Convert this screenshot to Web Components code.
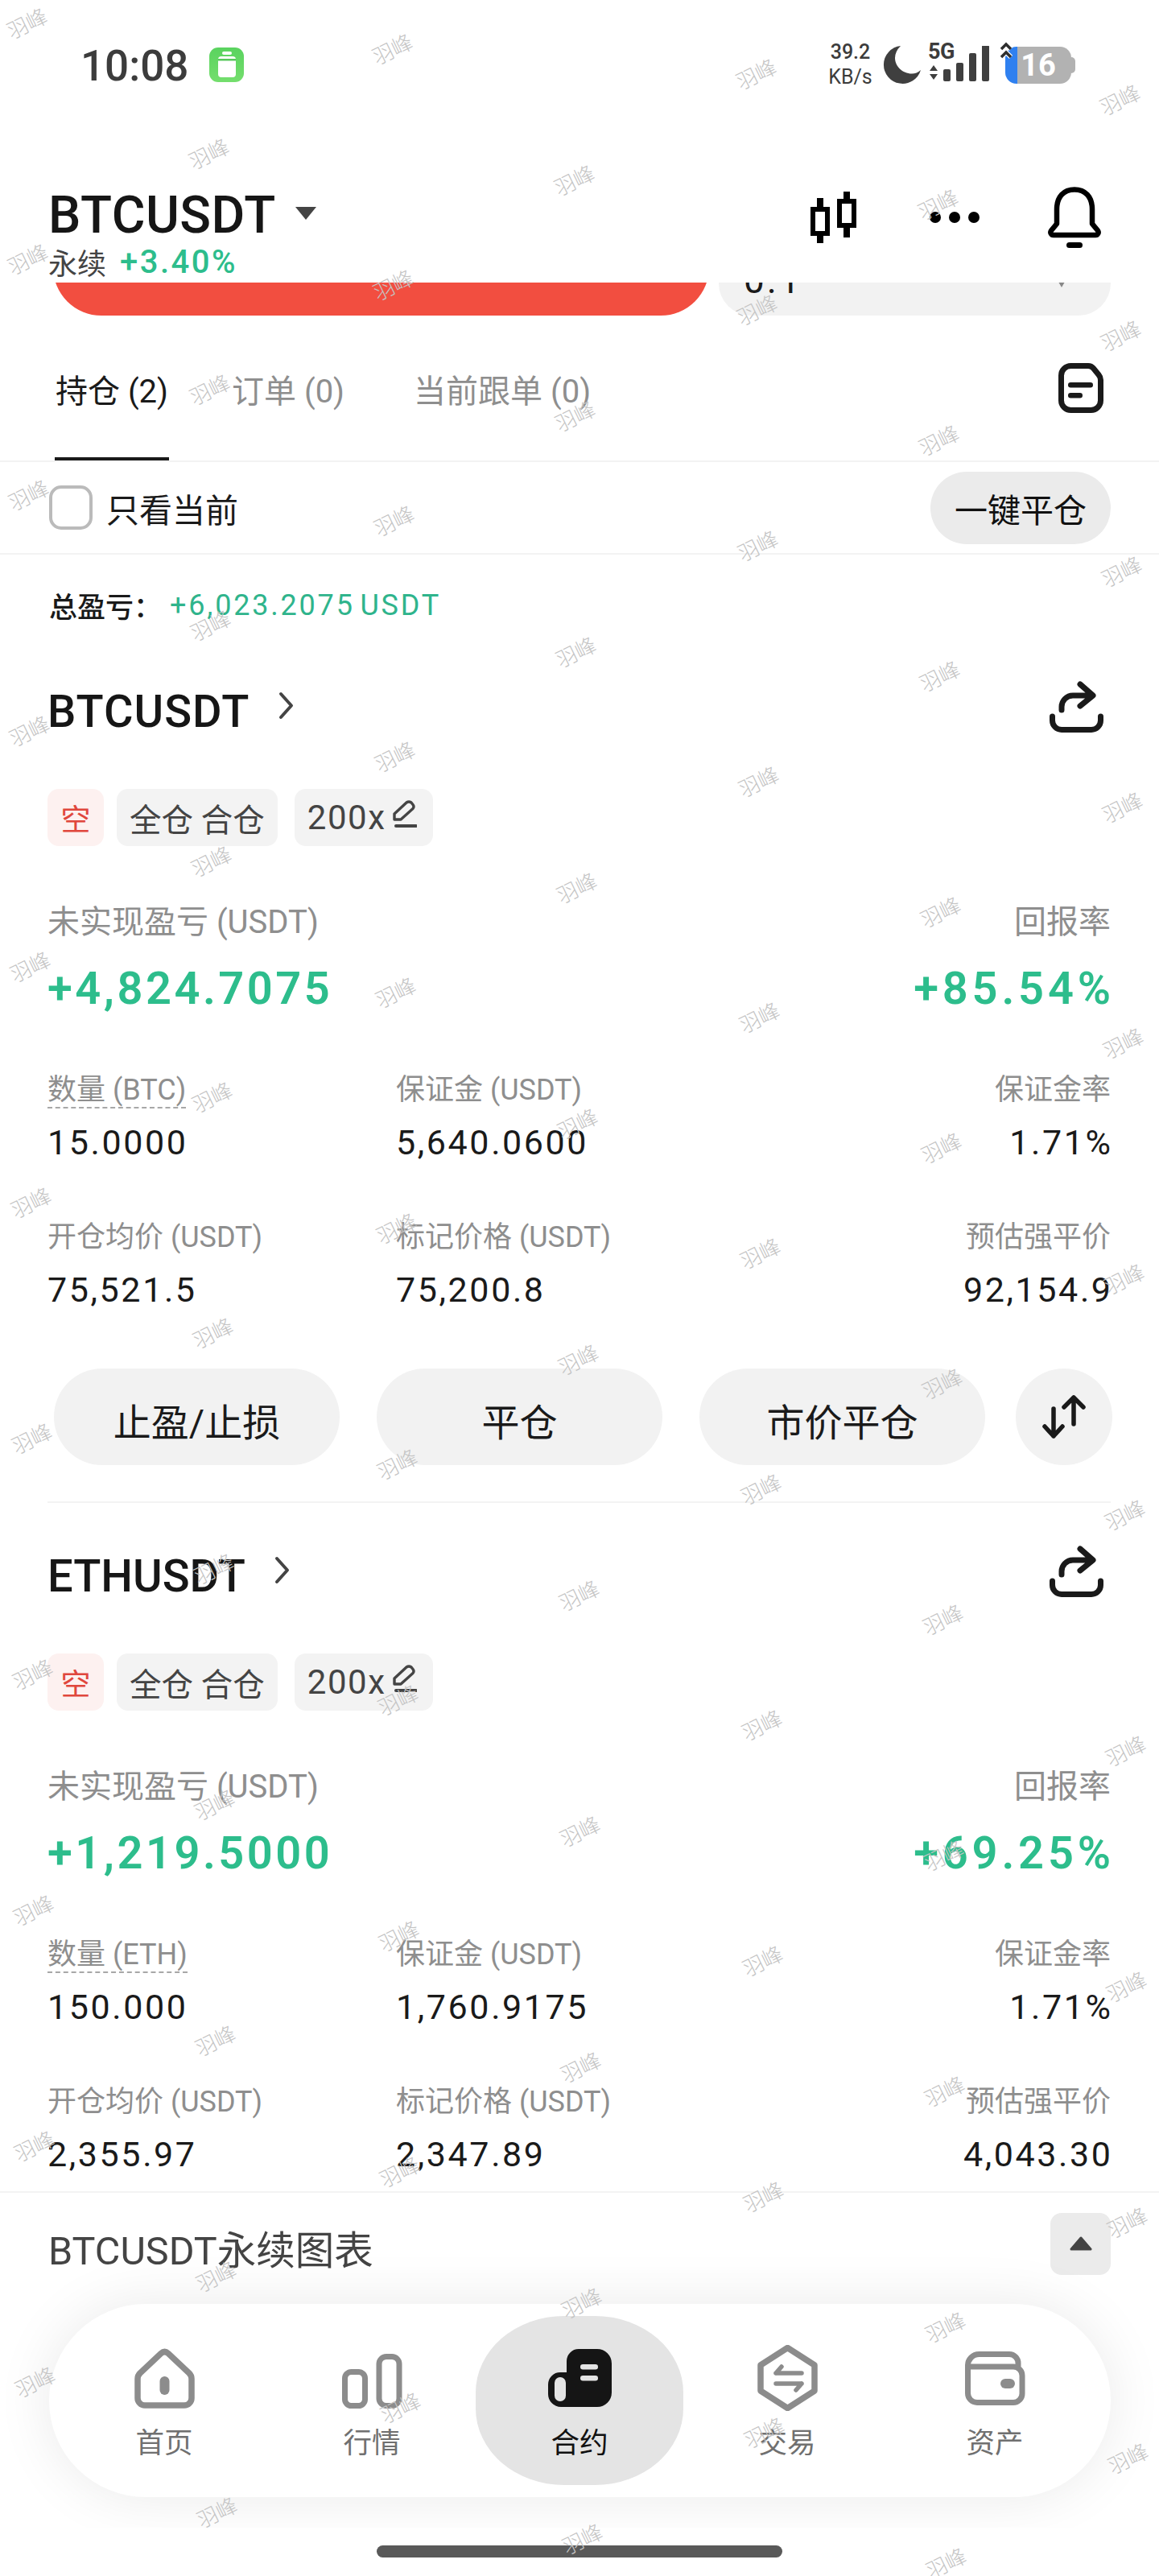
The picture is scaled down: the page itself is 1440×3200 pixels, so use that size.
<!DOCTYPE html>
<html lang="zh-CN">
<head>
<meta charset="utf-8">
<title>BTCUSDT</title>
<style>
html,body{margin:0;padding:0;background:#fff}
body{font-family:Roboto,"Noto Sans CJK SC",sans-serif;color:#1a1a1a}
</style>
</head>
<body>
<x-app>
  <x-status-bar></x-status-bar>
  <x-trade-header></x-trade-header>
  <x-order-strip></x-order-strip>
  <x-tabs>
    <x-tab active>持仓 (2)</x-tab>
    <x-tab style="margin-left:77px">订单 (0)</x-tab>
    <x-tab style="margin-left:84px">当前跟单 (0)</x-tab>
  </x-tabs>
  <x-filter-row></x-filter-row>
  <x-total-row></x-total-row>

  <x-position-card>
    <span slot="symbol" style="letter-spacing:1px">BTCUSDT</span>
    <x-tag slot="tags" kind="short">空</x-tag>
    <x-tag slot="tags">全仓 合仓</x-tag>
    <x-tag slot="tags" edit style="margin-left:5px">200x</x-tag>
    <x-pnl slot="pnl"><span slot="label">未实现盈亏 (USDT)</span>+4,824.7075</x-pnl>
    <x-pnl slot="pnl" end><span slot="label">回报率</span>+85.54%</x-pnl>
    <x-metric slot="metrics" dashed><span slot="label">数量 (BTC)</span>15.0000</x-metric>
    <x-metric slot="metrics"><span slot="label">保证金 (USDT)</span>5,640.0600</x-metric>
    <x-metric slot="metrics" end><span slot="label">保证金率</span>1.71%</x-metric>
    <x-metric slot="metrics"><span slot="label">开仓均价 (USDT)</span>75,521.5</x-metric>
    <x-metric slot="metrics"><span slot="label">标记价格 (USDT)</span>75,200.8</x-metric>
    <x-metric slot="metrics" end><span slot="label">预估强平价</span>92,154.9</x-metric>
    <x-action-row slot="actions">
      <x-action>止盈/止损</x-action>
      <x-action>平仓</x-action>
      <x-action>市价平仓</x-action>
      <x-swap-action></x-swap-action>
    </x-action-row>
  </x-position-card>

  <x-position-card>
    <span slot="symbol">ETHUSDT</span>
    <x-tag slot="tags" kind="short">空</x-tag>
    <x-tag slot="tags">全仓 合仓</x-tag>
    <x-tag slot="tags" edit style="margin-left:5px">200x</x-tag>
    <x-pnl slot="pnl"><span slot="label">未实现盈亏 (USDT)</span>+1,219.5000</x-pnl>
    <x-pnl slot="pnl" end><span slot="label">回报率</span>+69.25%</x-pnl>
    <x-metric slot="metrics" dashed><span slot="label">数量 (ETH)</span>150.000</x-metric>
    <x-metric slot="metrics"><span slot="label">保证金 (USDT)</span>1,760.9175</x-metric>
    <x-metric slot="metrics" end><span slot="label">保证金率</span>1.71%</x-metric>
    <x-metric slot="metrics"><span slot="label">开仓均价 (USDT)</span>2,355.97</x-metric>
    <x-metric slot="metrics"><span slot="label">标记价格 (USDT)</span>2,347.89</x-metric>
    <x-metric slot="metrics" end><span slot="label">预估强平价</span>4,043.30</x-metric>
  </x-position-card>

  <x-chart-row></x-chart-row>

  <x-dock>
    <x-dock-item>
      <svg slot="icon" width="75" height="75" viewBox="0 0 75 75"><path d="M33 6.5Q37.500 2.500 42 6.500L68 31Q71 34 71 38V62A9 9 0 0 1 62 71H13A9 9 0 0 1 4 62V38Q4 34 7 31Z" fill="none" stroke="#8c8c8c" stroke-width="7.500" stroke-linejoin="round"/><rect x="31.500" y="35" width="12" height="23" rx="6" fill="#8c8c8c"/></svg>
      首页
    </x-dock-item>
    <x-dock-item>
      <svg slot="icon" width="75" height="68" viewBox="0 0 75 68" style="margin-top:7px"><rect x="3.500" y="22.500" width="25" height="42" rx="8" fill="none" stroke="#8c8c8c" stroke-width="7"/><rect x="46" y="3.500" width="25" height="61" rx="9" fill="none" stroke="#8c8c8c" stroke-width="7"/></svg>
      行情
    </x-dock-item>
    <x-dock-item active>
      <svg slot="icon" width="79" height="72" viewBox="0 0 79 72"><path d="M38 0H61A18 18 0 0 1 79 18V54A18 18 0 0 1 61 72H16A16 16 0 0 1 0 56V44A15 15 0 0 1 15 29H23V15A15 15 0 0 1 38 0Z" fill="#151515"/><rect x="8" y="35" width="14" height="30" rx="7" fill="#e4e4e4"/><rect x="40" y="19" width="22" height="6.500" rx="3.200" fill="#e4e4e4"/><rect x="40" y="33" width="22" height="6.500" rx="3.200" fill="#e4e4e4"/></svg>
      合约
    </x-dock-item>
    <x-dock-item>
      <svg slot="icon" width="75" height="82" viewBox="0 0 75 82"><path d="M37.500 3.500L71 25V57L37.500 78.500L4 57V25Z" fill="none" stroke="#8c8c8c" stroke-width="7.500" stroke-linejoin="round"/><path d="M23 35H55M23 35L30 27M55 48H23M55 48L48 56" fill="none" stroke="#8c8c8c" stroke-width="5.500" stroke-linecap="round" stroke-linejoin="round"/></svg>
      交易
    </x-dock-item>
    <x-dock-item>
      <svg slot="icon" width="75" height="67" viewBox="0 0 75 67"><path d="M3.500 18A14 14 0 0 1 17.500 3.500H55A11 11 0 0 1 66 14.500V20M3.500 18V52A11.500 11.500 0 0 0 15 63.500H60A11 11 0 0 0 71 52.500V30A11 11 0 0 0 60 19H3.500" fill="none" stroke="#8c8c8c" stroke-width="7"/><rect x="44" y="34" width="18" height="12" rx="6" fill="#8c8c8c"/></svg>
      资产
    </x-dock-item>
  </x-dock>

  <x-watermarks></x-watermarks>
</x-app>

<script>
const def=(name,css,html)=>customElements.define(name,class extends HTMLElement{
  constructor(){super();this.attachShadow({mode:'open'}).innerHTML=`<style>${css}</style>${html}`;}
});

def('x-app',`:host{display:block;position:relative;width:1440px;height:3200px;overflow:hidden;background:#fff;font-family:Roboto,"Noto Sans CJK SC",sans-serif;color:#1a1a1a}`,`<slot></slot>`);

def('x-status-bar',`
:host{display:flex;align-items:center;height:160px;padding:0 104px 0 100px;box-sizing:border-box;color:#3c3c3c;background:#fff}
.time{font-size:53px;font-weight:500;line-height:60px;margin-top:3px}
.app{width:43px;height:43px;border-radius:11px;margin-left:26px;background:linear-gradient(180deg,#5ad35f,#74de6d);display:flex;align-items:center;justify-content:center}
.right{margin-left:auto;display:flex;align-items:center;height:60px}
.speed{display:flex;flex-direction:column;align-items:center;width:53px;font-size:25px;line-height:31px;font-weight:400}
.speed b{font-weight:500}
.moon{margin-left:14px;display:block}
.sig{position:relative;width:77px;height:52px;margin-left:9px;margin-top:5px}
.sig span{position:absolute;left:0;top:-6px;font-size:27px;font-weight:700;line-height:26px;letter-spacing:-.5px}
.sig svg{position:absolute;left:0;top:0}
.bat{position:relative;width:87px;height:46px;margin-left:19px;margin-top:1px}
.body{position:absolute;left:0;top:0;width:82px;height:46px;border-radius:14px;background:linear-gradient(90deg,#2f80f0 15px,#b2b2b2 15px);display:flex;align-items:center;justify-content:center;box-sizing:border-box;color:#fff;font-size:38px;font-weight:700}
.nub{position:absolute;left:82px;top:13px;width:5px;height:20px;border-radius:0 5px 5px 0;background:#b2b2b2}
.chev{position:absolute;left:-7px;top:-6px}
`,`
<span class="time">10:08</span>
<span class="app"><svg width="24" height="32" viewBox="0 0 24 32"><rect x="1" y="6" width="22" height="26" rx="4" fill="#fff"/><rect x="6" y="0" width="12" height="4" rx="2" fill="#fff"/><rect x="1" y="9" width="22" height="2.500" fill="#58c85c"/></svg></span>
<div class="right">
  <div class="speed"><b>39.2</b><span>KB/s</span></div>
  <svg class="moon" width="47" height="47" viewBox="0 0 47 47"><path d="M22 0A23.500 23.500 0 1 0 47 30Q42 34.500 36 34.500C24 34.500 15 25 15 15Q15 7 22 0Z" fill="#3f3f3f"/></svg>
  <div class="sig">
    <svg width="77" height="52" viewBox="0 0 77 52"><path d="M7 24L12 31H2ZM7 42L2 35H12Z" fill="#3f3f3f"/><rect x="19" y="29" width="9" height="15" rx="2" fill="#3f3f3f"/><rect x="35" y="21" width="9" height="23" rx="2" fill="#3f3f3f"/><rect x="51" y="9" width="9" height="35" rx="2" fill="#3f3f3f"/><rect x="67" y="-1" width="9" height="45" rx="2" fill="#3f3f3f"/></svg>
    <span>5G</span>
  </div>
  <div class="bat">
    <div class="body">16</div><div class="nub"></div>
    <svg class="chev" width="16" height="24" viewBox="0 0 16 24"><path d="M2 9L8 3L14 9M2 19L8 13L14 19" fill="none" stroke="#fff" stroke-width="6"/><path d="M2 9L8 3L14 9M2 19L8 13L14 19" fill="none" stroke="#2e2e2e" stroke-width="3.500"/></svg>
  </div>
</div>`);

def('x-trade-header',`
:host{display:flex;position:relative;z-index:2;height:191px;padding:77px 71px 0 60px;box-sizing:border-box;background:#fff}
.title{display:flex;align-items:center;height:60px;font-size:64px;font-weight:500;color:#161616;letter-spacing:.5px}
.caret{width:0;height:0;border-left:13.500px solid transparent;border-right:13.500px solid transparent;border-top:16px solid #444;margin-left:24px;margin-top:-4px}
.sub{display:flex;align-items:center;height:44px;margin-top:6px;font-size:36px;color:#444}
.sub b{font-weight:500;color:#2dbd8c;margin-left:17px;font-size:40px;letter-spacing:2.500px}
.tools{margin-left:auto;display:flex;align-items:center;height:76px;margin-top:-5px}
.dots{display:flex;gap:10px;margin-left:91px}
.dots i{width:14px;height:14px;border-radius:50%;background:#000}
.bell{margin-left:84px;display:block}
`,`
<div>
  <div class="title">BTCUSDT<span class="caret"></span></div>
  <div class="sub">永续<b>+3.40%</b></div>
</div>
<div class="tools">
  <svg width="57" height="64" viewBox="0 0 57 64" style="display:block"><path d="M12 8V64M45 0V57" stroke="#000" stroke-width="8"/><rect x="3" y="22" width="18" height="30" fill="#fff" stroke="#000" stroke-width="6"/><rect x="36" y="12" width="18" height="30" fill="#fff" stroke="#000" stroke-width="6"/></svg>
  <div class="dots"><i></i><i></i><i></i></div>
  <svg class="bell" width="68" height="76" viewBox="0 0 68 76"><path d="M8 60H60A3.500 3.500 0 0 0 63 54.500L56 46V28C56 12 47 3.500 34 3.500C21 3.500 12 12 12 28V46L5 54.500A3.500 3.500 0 0 0 8 60Z" fill="none" stroke="#000" stroke-width="6.500" stroke-linejoin="round"/><rect x="24" y="69" width="20" height="7" rx="3.500" fill="#000"/></svg>
</div>`);

def('x-order-strip',`
:host{display:flex;height:41px;overflow:hidden;align-items:flex-end;padding-left:66px;font-size:46px;color:#1a1a1a}
.buy{flex:none;width:815px;height:120px;border-radius:60px;background:#f24e40}
.qty{flex:none;width:487px;height:120px;margin-left:12px;border-radius:40px;background:#f2f2f2;display:flex;justify-content:space-between;align-items:flex-start;padding:51px 54px 0 31px;box-sizing:border-box;line-height:50px;letter-spacing:3px}
.qty i{width:0;height:0;margin-top:22px;border-left:7px solid transparent;border-right:7px solid transparent;border-top:12px solid #888}
`,`<div class="buy"></div><div class="qty"><span>0.1</span><i></i></div>`);

def('x-tabs',`
:host{display:flex;height:182px;padding:0 69px 0 68px;box-sizing:border-box;border-bottom:2px solid #f3f3f3}
.doc{margin-left:auto;margin-top:59px;display:block}
`,`<slot></slot><svg class="doc" width="56" height="62" viewBox="0 0 56 62"><path d="M15.500 3.500H37Q41 3.500 43.500 6.500L50 14.500Q52.500 17.500 52.500 21V46.500A12 12 0 0 1 40.500 58.500H15.500A12 12 0 0 1 3.500 46.500V15.500A12 12 0 0 1 15.500 3.500Z" fill="none" stroke="#1a1a1a" stroke-width="7"/><rect x="12" y="24" width="31" height="6.500" rx="3.200" fill="#1a1a1a"/><rect x="12" y="37" width="18" height="6.500" rx="3.200" fill="#1a1a1a"/></svg>`);

def('x-tab',`
:host{display:block;height:180px;box-sizing:border-box;padding:71px 1px 0;line-height:48px;font-size:40px;color:#8e8e8e;white-space:nowrap;border-bottom:4px solid transparent}
:host([active]){color:#1a1a1a;border-bottom-color:#1a1a1a}
`,`<slot></slot>`);

def('x-filter-row',`
:host{display:flex;align-items:center;height:115px;padding:0 60px 0 61px;box-sizing:border-box;border-bottom:2px solid #f3f3f3;font-size:41px;color:#1a1a1a}
.box{width:54px;height:55px;box-sizing:border-box;border:4px solid #bbb;border-radius:15px;margin-right:17px}
.btn{margin-left:auto;width:224px;height:90px;border-radius:45px;background:#ebebeb;display:flex;align-items:center;justify-content:center;color:#111}
`,`<span class="box"></span><span>只看当前</span><span class="btn">一键平仓</span>`);

def('x-total-row',`
:host{display:flex;align-items:center;height:125px;padding-left:61px;box-sizing:border-box;font-size:35px;color:#1a1a1a;font-weight:500}
.v{font-size:36px;font-weight:400;color:#2fb48c;margin-left:10px;letter-spacing:2.800px;word-spacing:-5px}
`,`<span>总盈亏：</span><span class="v">+6,023.2075 USDT</span>`);

def('x-position-card',`
:host{display:block;padding:0 60px 0 59px;}
.head{display:flex;align-items:center;height:140px;font-size:56px;font-weight:500;color:#161616}
.chev{display:block;margin-left:36px;margin-top:-16px}
.share{display:block;margin-left:auto;margin-right:9px;margin-top:-12px}
.tags{display:flex;gap:16px;margin-top:26px}
.pnl{display:flex;justify-content:space-between;margin-top:70px}
.metrics{display:grid;grid-template-columns:433px 1fr auto;row-gap:73px;margin-top:71px}
`,`
<div class="head"><span><slot name="symbol"></slot></span>
<svg class="chev" width="19" height="35" viewBox="0 0 19 35"><path d="M3 3L16 17.500L3 32" fill="none" stroke="#444" stroke-width="4" stroke-linecap="round" stroke-linejoin="round"/></svg>
<svg class="share" width="67" height="64" viewBox="0 0 67 64"><path d="M3.500 44V49A11.500 11.500 0 0 0 15 60.500H52A11.500 11.500 0 0 0 63.500 49V44M15 36V32A14 14 0 0 1 29 18H52M38 4L54 18L38 31" fill="none" stroke="#1a1a1a" stroke-width="7" stroke-linecap="round" stroke-linejoin="round"/></svg></div>
<div class="tags"><slot name="tags"></slot></div>
<div class="pnl"><slot name="pnl"></slot></div>
<div class="metrics"><slot name="metrics"></slot></div>
<slot name="actions"></slot>`);

def('x-tag',`
:host{display:inline-flex;align-items:center;height:71px;padding:0 16px;border-radius:14px;background:#f3f3f3;color:#444;font-size:39.500px;box-sizing:border-box;white-space:nowrap}
:host([kind=short]){background:#fdf1f0;color:#e0473d;font-size:37px;padding:0 16.500px}
svg{display:none;margin-left:8px;margin-top:-10px}
:host([edit]) svg{display:block}
:host([edit]){padding:0 20px 0 16px;font-size:42px;letter-spacing:1.500px;margin-left:3px}
`,`<slot></slot><svg width="31" height="34" viewBox="0 0 31 34"><path d="M3 24V17L18 3Q21 1 24 3L26 5.500Q28 8 26 10.500L11 24Z" fill="none" stroke="#444" stroke-width="3.400" stroke-linejoin="round"/><path d="M5 32H30" stroke="#444" stroke-width="4" stroke-linecap="round"/></svg>`);

def('x-pnl',`
:host{display:block;color:#2dbd8c;font-size:56px;font-weight:600;letter-spacing:3.500px;line-height:70px;white-space:nowrap}
:host([end]){text-align:right;letter-spacing:4.800px;margin-right:-4.800px}
.label{font-size:40px;line-height:50px;font-weight:400;color:#8e8e8e;letter-spacing:0;margin-bottom:22px}
:host([end]) .label{margin-right:4.800px}
`,`<div class="label"><slot name="label"></slot></div><slot></slot>`);

def('x-metric',`
:host{display:block;font-size:43px;line-height:50px;color:#1a1a1a;letter-spacing:2.600px;white-space:nowrap}
:host([end]){text-align:right;margin-right:-2.600px}
.label{height:40px;line-height:40px;font-size:36px;color:#8e8e8e;letter-spacing:0;margin-bottom:20px}
:host([end]) .label{margin-right:2.600px}
:host([dashed]) .label span{display:inline-block;height:41px;border-bottom:2px dashed #a8a8a8}
`,`<div class="label"><span><slot name="label"></slot></span></div><slot></slot>`);

def('x-action-row',`
:host{display:flex;margin-top:73px;padding:0 0 45px 8px;border-bottom:2px solid #f3f3f3;margin-bottom:21px;gap:46px;width:1321px;box-sizing:border-box}
`,`<slot></slot>`);

def('x-action',`
:host{flex:none;width:355px;height:120px;border-radius:60px;background:#f2f2f2;display:flex;align-items:center;justify-content:center;font-size:47px;color:#1a1a1a;padding-top:6px;box-sizing:border-box}
`,`<slot></slot>`);

def('x-swap-action',`
:host{flex:none;width:120px;height:120px;margin-left:-8px;border-radius:50%;background:#f2f2f2;display:block}
svg{display:block}
`,`<svg width="120" height="120" viewBox="0 0 120 120"><path d="M47 50V84M36 72L47 84L58 72M72 36V69M60 48L72 36L84 48" fill="none" stroke="#1a1a1a" stroke-width="5.500" stroke-linecap="round" stroke-linejoin="round"/></svg>`);

def('x-chart-row',`
:host{display:flex;align-items:center;height:142px;margin-top:21px;padding:0 60px 4px 60px;box-sizing:border-box;border-top:2px solid #f3f3f3;font-size:48.500px;color:#444}
.tog{margin-left:auto;align-self:flex-start;margin-top:25px;width:75px;height:77px;border-radius:14px;background:#ebebeb;display:flex;align-items:center;justify-content:center}
`,`<span>BTCUSDT永续图表</span><span class="tog"><svg width="28" height="19" viewBox="0 0 28 19"><path d="M14 2L26 16H2Z" fill="#444" stroke="#444" stroke-width="3" stroke-linejoin="round"/></svg></span>`);

def('x-dock',`
:host{position:absolute;left:0;right:0;bottom:0;height:460px;display:block}
.clip{height:400px;overflow:hidden;padding:122px 60px 0 61px;box-sizing:border-box}
.pill{display:flex;align-items:center;height:240px;width:1319px;padding:0 15px 0 14px;box-sizing:border-box;background:#fff;border-radius:120px;box-shadow:0 0 70px rgba(0,0,0,.085)}
.home{width:504px;height:15px;border-radius:8px;background:#595959;margin:22px auto 0}
`,`<div class="clip"><div class="pill"><slot></slot></div></div><div class="home"></div>`);

def('x-dock-item',`
:host{flex:none;width:258px;height:210px;box-sizing:border-box;padding-top:36px;display:flex;flex-direction:column;align-items:center;font-size:35.500px;color:#707070;border-radius:110px/95px;line-height:44px}
:host([active]){background:#e4e4e4;color:#111;}
.ic{height:82px;margin-bottom:18px;display:flex;align-items:center;justify-content:center}
`,`<div class="ic"><slot name="icon"></slot></div><slot></slot>`);

customElements.define('x-watermarks',class extends HTMLElement{
  constructor(){
    super();
    const cols=[[33,28],[259,190],[487,60],[713,223],[939,91],[1165,253],[1391,123]];
    let h='';
    for(const [x0,y0] of cols){
      for(let y=y0;y<3230;y+=293){
        const x=x0+.0035*(y-y0);
        h+=`<span style="left:${x.toFixed(1)}px;top:${y}px">羽峰</span>`;
      }
    }
    this.attachShadow({mode:'open'}).innerHTML=`<style>
:host{position:absolute;inset:0;display:block;pointer-events:none;z-index:5}
span{position:absolute;width:60px;height:30px;margin:-15px 0 0 -30px;text-align:center;line-height:30px;font-size:26px;color:#c4c4c4;transform:rotate(-26deg);white-space:nowrap;font-family:"Noto Sans CJK SC",sans-serif;font-weight:300}
</style>${h}`;
  }
});
</script>
</body>
</html>
